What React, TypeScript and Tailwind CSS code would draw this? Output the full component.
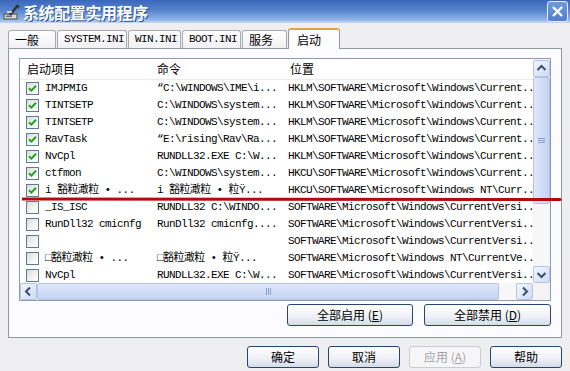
import type { ReactNode } from "react";

const MONO = "font-['Liberation_Mono','Noto_Sans_CJK_SC',monospace] text-[11px] tracking-[-0.6px]";
const CJK = "font-['Noto_Sans_CJK_SC',sans-serif]";

type Row = { on: boolean; name: string; cmd: string; loc: string };

const ROWS: Row[] = [
  { on: true, name: "IMJPMIG", cmd: "“C:\\WINDOWS\\IME\\i...", loc: "HKLM\\SOFTWARE\\Microsoft\\Windows\\Current.." },
  { on: true, name: "TINTSETP", cmd: "C:\\WINDOWS\\system...", loc: "HKLM\\SOFTWARE\\Microsoft\\Windows\\Current.." },
  { on: true, name: "TINTSETP", cmd: "C:\\WINDOWS\\system...", loc: "HKLM\\SOFTWARE\\Microsoft\\Windows\\Current.." },
  { on: true, name: "RavTask", cmd: "“E:\\rising\\Rav\\Ra...", loc: "HKLM\\SOFTWARE\\Microsoft\\Windows\\Current.." },
  { on: true, name: "NvCpl", cmd: "RUNDLL32.EXE C:\\W...", loc: "HKLM\\SOFTWARE\\Microsoft\\Windows\\Current.." },
  { on: true, name: "ctfmon", cmd: "C:\\WINDOWS\\system...", loc: "HKCU\\SOFTWARE\\Microsoft\\Windows\\Current.." },
  { on: true, name: "i 豁粒澉粒 •  ...", cmd: "i 豁粒澉粒 • 粒Ÿ...", loc: "HKCU\\SOFTWARE\\Microsoft\\Windows NT\\Curr.." },
  { on: false, name: "_IS_ISC", cmd: "RUNDLL32 C:\\WINDO...", loc: "SOFTWARE\\Microsoft\\Windows\\CurrentVersi.." },
  { on: false, name: "RunDll32 cmicnfg", cmd: "RunDll32 cmicnfg....", loc: "SOFTWARE\\Microsoft\\Windows\\CurrentVersi.." },
  { on: false, name: "", cmd: "", loc: "SOFTWARE\\Microsoft\\Windows\\CurrentVersi.." },
  { on: false, name: "□豁粒澉粒 •  ...", cmd: "□豁粒澉粒 • 粒Ÿ...", loc: "SOFTWARE\\Microsoft\\Windows NT\\CurrentVe.." },
  { on: false, name: "NvCpl", cmd: "RUNDLL32.EXE C:\\W...", loc: "SOFTWARE\\Microsoft\\Windows\\CurrentVersi.." },
];

function Check({ on }: { on: boolean }) {
  return (
    <span className="flex h-[13px] w-[13px] shrink-0 items-center justify-center border border-[#5e7a97] bg-[linear-gradient(135deg,#dcdcd6,#f8f8f6_70%,#ffffff)]">
      {on && (
        <svg width="9" height="9" viewBox="0 0 9 9">
          <path d="M1 4.2 L3.4 6.6 L8 1.8" fill="none" stroke="#21a121" strokeWidth="2" />
        </svg>
      )}
    </span>
  );
}

function Arrow({ dir }: { dir: "up" | "down" | "left" | "right" }) {
  const d = {
    up: "M4.5 10 L8.5 6 L12.5 10",
    down: "M4.5 7 L8.5 11 L12.5 7",
    left: "M10 4.5 L6 8.5 L10 12.5",
    right: "M7 4.5 L11 8.5 L7 12.5",
  }[dir];
  return (
    <span className="flex h-[17px] w-[17px] shrink-0 items-center justify-center rounded-[2px] border border-[#b3c4e4] bg-[linear-gradient(135deg,#f3f6fd,#cfdcf5)]">
      <svg width="17" height="17" viewBox="0 0 17 17" className="-m-px">
        <path d={d} fill="none" stroke="#3a4d73" strokeWidth="2" />
      </svg>
    </span>
  );
}

function Button({ children, w, disabled }: { children: ReactNode; w: string; disabled?: boolean }) {
  return (
    <div
      className={`${w} flex h-[22px] items-center justify-center rounded-[3px] border text-[12px] ${CJK} ${
        disabled
          ? "border-[#c8cbd2] bg-[#f6f6f8] text-[#a3a3a3]"
          : "border-[#26466f] bg-[linear-gradient(#ffffff,#eef0f6_60%,#d6dbe6)] text-black"
      }`}
    >
      {children}
    </div>
  );
}

function Tab({ label, w, mono, active }: { label: string; w: string; mono?: boolean; active?: boolean }) {
  return (
    <div
      className={`${w} flex items-center rounded-t-[3px] border border-b-0 pl-[6px] ${
        mono ? MONO : `${CJK} text-[12px]`
      } ${
        active
          ? "relative z-10 -mb-px h-[21px] border-[#919b9c] border-t-2 border-t-[#e8a33c] bg-[#fcfcfe] pl-[8px]"
          : "h-[18px] border-[#a7a9b0] bg-[linear-gradient(#ffffff,#f1f0f3)]"
      }`}
    >
      {label}
    </div>
  );
}

export default function App() {
  return (
    <div className="relative flex h-[371px] w-[570px] flex-col overflow-hidden bg-[#efeef1] text-black">
      {/* title bar */}
      <div className="flex h-[23px] shrink-0 items-center bg-[linear-gradient(#3a67ba,#5783cd_45%,#8fb2e6_85%,#c7d8f1)] pl-[3px] pr-[2px]">
        <svg width="18" height="18" viewBox="0 0 18 18" className="shrink-0">
          <rect x="1" y="11" width="13" height="5" fill="#d8d8d8" stroke="#4a4a4a" />
          <rect x="3" y="12.5" width="6" height="1.5" fill="#6a6a6a" />
          <path d="M7 12 L15 2" stroke="#2e2e2e" strokeWidth="2.2" />
          <path d="M13 2 L17 3 L15 6 Z" fill="#3a3a3a" />
          <path d="M4 9 L9 9" stroke="#f2f2f2" strokeWidth="1.5" />
        </svg>
        <span className={`ml-[2px] text-[16px] font-bold leading-none tracking-[-0.4px] text-white ${CJK} [text-shadow:1px_1px_0_#284f95]`}>
          系统配置实用程序
        </span>
        <div className="ml-auto flex h-[21px] w-[21px] items-center justify-center rounded-[3px] border border-[#e9f0fb] bg-[linear-gradient(#7199da,#5280cb)]">
          <svg width="13" height="13" viewBox="0 0 13 13">
            <path d="M2 2 L11 11 M11 2 L2 11" stroke="#ffffff" strokeWidth="2.4" />
          </svg>
        </div>
      </div>

      <div className="flex flex-col px-[8px]">
        {/* tabs */}
        <div className="mt-[6px] flex h-[19px] items-end gap-[1px]">
          <Tab label="一般" w="w-[48px]" />
          <Tab label="SYSTEM.INI" w="w-[70px]" mono />
          <Tab label="WIN.INI" w="w-[53px]" mono />
          <Tab label="BOOT.INI" w="w-[59px]" mono />
          <Tab label="服务" w="w-[45px]" />
          <Tab label="启动" w="w-[52px]" active />
        </div>

        {/* tab page */}
        <div className="flex h-[290px] flex-col border border-[#919b9c] bg-[#fcfcfe]">
          <div className="ml-[10px] mt-[9px] flex h-[243px] w-[532px] flex-col border border-[#8d9cb0] bg-white">
            <div className="flex h-[224px]">
              <div className="flex-1 overflow-hidden">
                <div className={`grid h-[21px] grid-cols-[133px_131px_1fr] items-center border-b border-[#ececec] text-[12px] ${CJK}`}>
                  <span className="pl-[7px]">启动项目</span>
                  <span className="pl-[4px]">命令</span>
                  <span className="pl-[6px]">位置</span>
                </div>
                {ROWS.map((r, i) => (
                  <div key={i} className={`grid h-[17px] grid-cols-[133px_131px_1fr] items-center whitespace-nowrap ${MONO}`}>
                    <div className="flex items-center gap-[6px] overflow-hidden pl-[6px]">
                      <Check on={r.on} />
                      <span>{r.name}</span>
                    </div>
                    <span className="overflow-hidden pl-[4px]">{r.cmd}</span>
                    <span className="pl-[4px]">{r.loc}</span>
                  </div>
                ))}
              </div>
              {/* vertical scrollbar */}
              <div className="relative z-10 flex w-[17px] shrink-0 flex-col bg-[#f7f7f8] pt-px">
                <Arrow dir="up" />
                <div className="flex h-[127px] items-center justify-center rounded-[2px] border border-[#b3c4e4] bg-[linear-gradient(90deg,#dfe8fa,#c3d4f3)]">
                  <svg width="7" height="7" viewBox="0 0 7 7">
                    <path d="M0 1.5 H7 M0 3.5 H7 M0 5.5 H7" stroke="#8aa0c8" strokeWidth="1" />
                  </svg>
                </div>
                <div className="flex-1" />
                <Arrow dir="down" />
              </div>
            </div>
            {/* horizontal scrollbar */}
            <div className="flex h-[17px]">
              <div className="flex flex-1 bg-[#f7f7f8]">
                <Arrow dir="left" />
                <div className="flex w-[462px] items-center justify-center rounded-[2px] border border-[#b3c4e4] bg-[linear-gradient(#dfe8fa,#c3d4f3)]">
                  <svg width="7" height="7" viewBox="0 0 7 7">
                    <path d="M1.5 0 V7 M3.5 0 V7 M5.5 0 V7" stroke="#8aa0c8" strokeWidth="1" />
                  </svg>
                </div>
                <div className="flex-1" />
                <Arrow dir="right" />
              </div>
              <div className="w-[17px] bg-[#f4f3f1]" />
            </div>
          </div>

          <div className="mt-[3px] flex w-[542px] justify-end gap-[11px]">
            <Button w="w-[126px]">
              全部启用 (<span className="underline">E</span>)
            </Button>
            <Button w="w-[127px]">
              全部禁用 (<span className="underline">D</span>)
            </Button>
          </div>
        </div>

        {/* dialog buttons */}
        <div className="mt-[8px] flex justify-end gap-[9px]">
          <Button w="w-[72px]">确定</Button>
          <Button w="w-[72px]">取消</Button>
          <Button w="w-[72px]" disabled>
            应用 (<span className="underline">A</span>)
          </Button>
          <Button w="w-[72px]">帮助</Button>
        </div>
      </div>

      {/* red annotation stroke */}
      <svg className="pointer-events-none absolute left-[22px] top-[196px] z-20" width="540" height="6" viewBox="0 0 540 6">
        <path d="M1 3 L538 3.5" stroke="#b00c0c" strokeWidth="3" strokeLinecap="round" />
      </svg>
    </div>
  );
}
